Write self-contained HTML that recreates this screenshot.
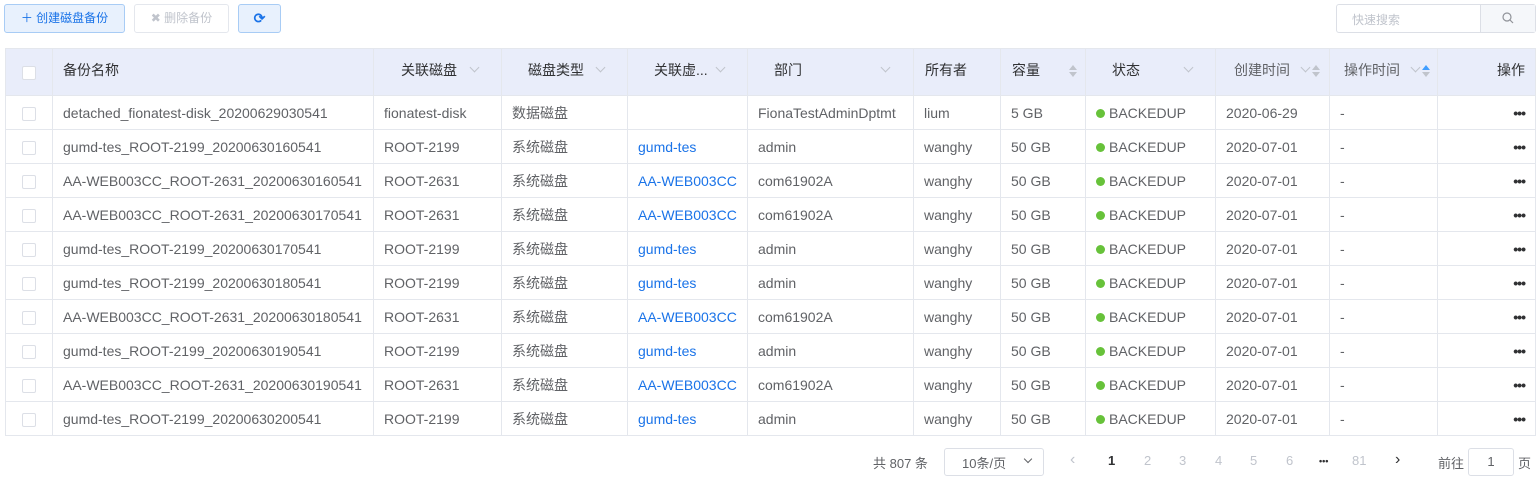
<!DOCTYPE html>
<html><head><meta charset="utf-8"><style>
*{box-sizing:border-box;margin:0;padding:0}
body{width:1540px;height:482px;background:#fff;font-family:"Liberation Sans","Noto Sans CJK SC",sans-serif;font-size:14px;color:#606266;position:relative;overflow:hidden}
.btn{position:absolute;top:4px;height:29px;border:1px solid;border-radius:3px;font-size:12px;line-height:27px;text-align:center}
.a{position:absolute}
table{position:absolute;left:5px;top:48px;border-collapse:collapse;table-layout:fixed;width:1530px}
td,th{border:1px solid #e4e7ed;height:34px;padding:0 10px;white-space:nowrap;overflow:hidden;text-align:left;font-weight:normal;line-height:16px}
th{height:47px;background:#e9edfa;color:#303133;position:relative}
td.c,th.c{text-align:center;padding:0}
.cb{display:inline-block;width:14px;height:14px;border:1px solid #dcdfe6;border-radius:2px;background:#fff;vertical-align:middle}
.l{color:#1a73e8}
.dot{display:inline-block;width:9px;height:9px;border-radius:50%;background:#67c23a;margin-right:4px;vertical-align:0px}
.dd{position:absolute;top:15px;width:7px;height:7px;border-right:1px solid #c0c4cc;border-bottom:1px solid #c0c4cc;transform:rotate(45deg)}
.s{position:absolute;width:0;height:0;border-left:4px solid transparent;border-right:4px solid transparent}
.up{border-bottom:5px solid #c0c4cc;top:16px}.dn{border-top:5px solid #c0c4cc;top:23px}
.ht{position:absolute;top:13px}
.pg{position:absolute;top:453px;font-size:13px}
.op{text-align:right;font-weight:bold;color:#303133;letter-spacing:-1px}
</style></head><body>
<div class="btn" style="left:4px;width:121px;background:#e8f1fd;border-color:#a8ccf5;color:#1a73e8">＋ 创建磁盘备份</div>
<div class="btn" style="left:134px;width:95px;background:#fff;border-color:#e4e7ed;color:#c0c4cc">✖ 删除备份</div>
<div class="btn" style="left:238px;width:43px;background:#e8f1fd;border-color:#a8ccf5;color:#1a73e8;font-weight:bold;font-size:14px">⟳</div>
<div class="a" style="left:1336px;top:4px;width:200px;height:29px;border:1px solid #dcdfe6;border-radius:3px"></div>
<div class="a" style="left:1480px;top:5px;width:55px;height:27px;background:#f5f7fa;border-left:1px solid #dcdfe6"></div>
<div class="a" style="left:1352px;top:11px;font-size:12px;color:#c0c4cc">快速搜索</div>
<svg class="a" style="left:1502px;top:12px" width="12" height="12"><circle cx="5" cy="5" r="4" fill="none" stroke="#909399" stroke-width="1.2"/><line x1="8" y1="8" x2="11" y2="11" stroke="#909399" stroke-width="1.2"/></svg>
<table>
<colgroup><col style="width:47px"><col style="width:321px"><col style="width:128px"><col style="width:126px"><col style="width:120px"><col style="width:166px"><col style="width:87px"><col style="width:85px"><col style="width:130px"><col style="width:114px"><col style="width:108px"><col style="width:98px"></colgroup>
<tr>
<th class="c"><span class="cb"></span></th>
<th><span class="ht" style="left:10px">备份名称</span></th>
<th><span class="ht" style="left:27px">关联磁盘</span><i class="dd" style="left:97px"></i></th>
<th><span class="ht" style="left:26px">磁盘类型</span><i class="dd" style="left:95px"></i></th>
<th><span class="ht" style="left:26px">关联虚...</span><i class="dd" style="left:89px"></i></th>
<th><span class="ht" style="left:26px">部门</span><i class="dd" style="left:134px"></i></th>
<th><span class="ht" style="left:11px">所有者</span></th>
<th><span class="ht" style="left:11px">容量</span><i class="s up" style="left:68px"></i><i class="s dn" style="left:68px"></i></th>
<th><span class="ht" style="left:26px">状态</span><i class="dd" style="left:99px"></i></th>
<th><span class="ht" style="left:18px;color:#606266">创建时间</span><i class="dd" style="left:86px"></i><i class="s up" style="left:96px"></i><i class="s dn" style="left:96px"></i></th>
<th><span class="ht" style="left:14px;color:#606266">操作时间</span><i class="dd" style="left:82px"></i><i class="s up" style="left:92px;border-bottom-color:#409eff"></i><i class="s dn" style="left:92px"></i></th>
<th><span class="ht" style="right:10px">操作</span></th>
</tr>
<tr><td class="c"><span class="cb"></span></td><td>detached_fionatest-disk_20200629030541</td><td>fionatest-disk</td><td>数据磁盘</td><td></td><td>FionaTestAdminDptmt</td><td>lium</td><td>5 GB</td><td><span class="dot"></span>BACKEDUP</td><td>2020-06-29</td><td>-</td><td class="op">•••</td></tr>
<tr><td class="c"><span class="cb"></span></td><td>gumd-tes_ROOT-2199_20200630160541</td><td>ROOT-2199</td><td>系统磁盘</td><td class="l">gumd-tes</td><td>admin</td><td>wanghy</td><td>50 GB</td><td><span class="dot"></span>BACKEDUP</td><td>2020-07-01</td><td>-</td><td class="op">•••</td></tr>
<tr><td class="c"><span class="cb"></span></td><td>AA-WEB003CC_ROOT-2631_20200630160541</td><td>ROOT-2631</td><td>系统磁盘</td><td class="l">AA-WEB003CC</td><td>com61902A</td><td>wanghy</td><td>50 GB</td><td><span class="dot"></span>BACKEDUP</td><td>2020-07-01</td><td>-</td><td class="op">•••</td></tr>
<tr><td class="c"><span class="cb"></span></td><td>AA-WEB003CC_ROOT-2631_20200630170541</td><td>ROOT-2631</td><td>系统磁盘</td><td class="l">AA-WEB003CC</td><td>com61902A</td><td>wanghy</td><td>50 GB</td><td><span class="dot"></span>BACKEDUP</td><td>2020-07-01</td><td>-</td><td class="op">•••</td></tr>
<tr><td class="c"><span class="cb"></span></td><td>gumd-tes_ROOT-2199_20200630170541</td><td>ROOT-2199</td><td>系统磁盘</td><td class="l">gumd-tes</td><td>admin</td><td>wanghy</td><td>50 GB</td><td><span class="dot"></span>BACKEDUP</td><td>2020-07-01</td><td>-</td><td class="op">•••</td></tr>
<tr><td class="c"><span class="cb"></span></td><td>gumd-tes_ROOT-2199_20200630180541</td><td>ROOT-2199</td><td>系统磁盘</td><td class="l">gumd-tes</td><td>admin</td><td>wanghy</td><td>50 GB</td><td><span class="dot"></span>BACKEDUP</td><td>2020-07-01</td><td>-</td><td class="op">•••</td></tr>
<tr><td class="c"><span class="cb"></span></td><td>AA-WEB003CC_ROOT-2631_20200630180541</td><td>ROOT-2631</td><td>系统磁盘</td><td class="l">AA-WEB003CC</td><td>com61902A</td><td>wanghy</td><td>50 GB</td><td><span class="dot"></span>BACKEDUP</td><td>2020-07-01</td><td>-</td><td class="op">•••</td></tr>
<tr><td class="c"><span class="cb"></span></td><td>gumd-tes_ROOT-2199_20200630190541</td><td>ROOT-2199</td><td>系统磁盘</td><td class="l">gumd-tes</td><td>admin</td><td>wanghy</td><td>50 GB</td><td><span class="dot"></span>BACKEDUP</td><td>2020-07-01</td><td>-</td><td class="op">•••</td></tr>
<tr><td class="c"><span class="cb"></span></td><td>AA-WEB003CC_ROOT-2631_20200630190541</td><td>ROOT-2631</td><td>系统磁盘</td><td class="l">AA-WEB003CC</td><td>com61902A</td><td>wanghy</td><td>50 GB</td><td><span class="dot"></span>BACKEDUP</td><td>2020-07-01</td><td>-</td><td class="op">•••</td></tr>
<tr><td class="c"><span class="cb"></span></td><td>gumd-tes_ROOT-2199_20200630200541</td><td>ROOT-2199</td><td>系统磁盘</td><td class="l">gumd-tes</td><td>admin</td><td>wanghy</td><td>50 GB</td><td><span class="dot"></span>BACKEDUP</td><td>2020-07-01</td><td>-</td><td class="op">•••</td></tr>
</table>
<div class="pg" style="left:873px">共 807 条</div>
<div class="a" style="left:944px;top:448px;width:100px;height:28px;border:1px solid #dcdfe6;border-radius:3px"></div>
<div class="pg" style="left:962px">10条/页</div>
<i class="a" style="left:1025px;top:456px;width:6px;height:6px;border-right:1px solid #606266;border-bottom:1px solid #606266;transform:rotate(45deg)"></i>
<div class="pg" style="left:1070px;color:#c0c4cc;font-size:16px;top:451px">‹</div>
<div class="pg" style="left:1108px;color:#303133;font-weight:bold">1</div>
<div class="pg" style="left:1144px;color:#c0c4cc">2</div>
<div class="pg" style="left:1179px;color:#c0c4cc">3</div>
<div class="pg" style="left:1215px;color:#c0c4cc">4</div>
<div class="pg" style="left:1250px;color:#c0c4cc">5</div>
<div class="pg" style="left:1286px;color:#c0c4cc">6</div>
<div class="pg" style="left:1319px;color:#303133;font-weight:bold;font-size:9px;top:456px">•••</div>
<div class="pg" style="left:1352px;color:#c0c4cc">81</div>
<div class="pg" style="left:1395px;color:#303133;font-size:16px;top:451px">›</div>
<div class="pg" style="left:1438px">前往</div>
<div class="a" style="left:1468px;top:448px;width:46px;height:28px;border:1px solid #dcdfe6;border-radius:3px;text-align:center;line-height:26px;color:#606266;font-size:13px">1</div>
<div class="pg" style="left:1518px">页</div>
</body></html>
